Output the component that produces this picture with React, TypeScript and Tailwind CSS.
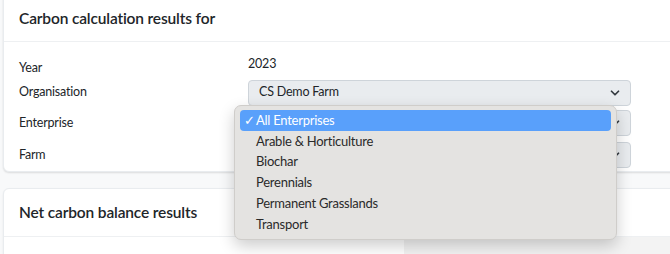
import { ChevronDown } from 'lucide-react';

const enterprises = [
  'All Enterprises',
  'Arable & Horticulture',
  'Biochar',
  'Perennials',
  'Permanent Grasslands',
  'Transport',
];

function FakeSelect({ value }: { value: string }) {
  return (
    <div className="flex h-[26px] w-[383px] items-center justify-between rounded-[4px] border border-[#ced4da] bg-[#e9ecef] pl-[10px] pr-[8px] text-[12.5px] tracking-[-0.2px] text-[#212529]">
      <span>{value}</span>
      <ChevronDown size={14} strokeWidth={3} className="text-[#343a40]" />
    </div>
  );
}

export default function App() {
  return (
    <div
      className="relative h-[254px] w-[670px] overflow-hidden bg-[#f8f9fa] text-[#212529]"
      style={{ fontFamily: 'Lato, "Liberation Sans", sans-serif' }}
    >
      {/* Results-for card */}
      <div className="ml-[3px] mt-[-10px] w-[700px] rounded-[6px] border border-[#e9ecef] bg-white shadow-[0_1px_2px_rgba(0,0,0,0.12)]">
        <div className="flex h-[51px] items-end border-b border-[#eef0f2] px-[15px] pb-[15px]">
          <h2 className="text-[15.5px] font-semibold leading-none tracking-[-0.15px]">Carbon calculation results for</h2>
        </div>
        <div className="px-[15px] pb-[1px] pt-[13px] text-[12.5px] tracking-[-0.2px]">
          <div className="flex h-[24px] items-center">
            <span className="w-[229px] pt-[2px]">Year</span>
            <span className="pb-[5px]">2023</span>
          </div>
          <div className="flex h-[27px] items-center">
            <span className="w-[229px]">Organisation</span>
            <FakeSelect value="CS Demo Farm" />
          </div>
          <div className="flex h-[34px] items-center">
            <span className="w-[229px] pt-[1px]">Enterprise</span>
            <FakeSelect value="All Enterprises" />
          </div>
          <div className="flex h-[30px] items-center">
            <span className="w-[229px]">Farm</span>
            <FakeSelect value="CS Demo Farm" />
          </div>
        </div>
      </div>

      {/* Net balance card */}
      <div className="ml-[3px] mt-[16px] w-[700px] rounded-[6px] border border-[#e9ecef] bg-white shadow-[0_1px_2px_rgba(0,0,0,0.08)]">
        <div className="flex h-[48px] items-center border-b border-[#eef0f2] px-[15px] pt-[1px]">
          <h2 className="text-[15.5px] font-semibold tracking-[-0.15px]">Net carbon balance results</h2>
        </div>
        <div className="flex h-[30px]">
          <div className="w-[400px]" />
          <div className="flex-1 bg-[#f3f3f3]" />
        </div>
      </div>

      {/* Open native-style dropdown */}
      <div className="absolute left-[234px] top-[105px] w-[383px] rounded-[7px] border border-[#cfcdca] bg-[#e4e3e1] px-[5px] py-[4px] text-[13px] tracking-[-0.25px] text-[#2a2a2a] shadow-[0_6px_16px_rgba(0,0,0,0.2)]">
        {enterprises.map((e, i) => (
          <div
            key={e}
            className={
              i === 0
                ? 'flex h-[21px] items-center rounded-[4px] bg-[#59a0fb] pl-[4px] text-white'
                : 'flex h-[20.8px] items-center pl-[16px]'
            }
          >
            {i === 0 && <span className="w-[12px]">✓</span>}
            <span>{e}</span>
          </div>
        ))}
      </div>
    </div>
  );
}
